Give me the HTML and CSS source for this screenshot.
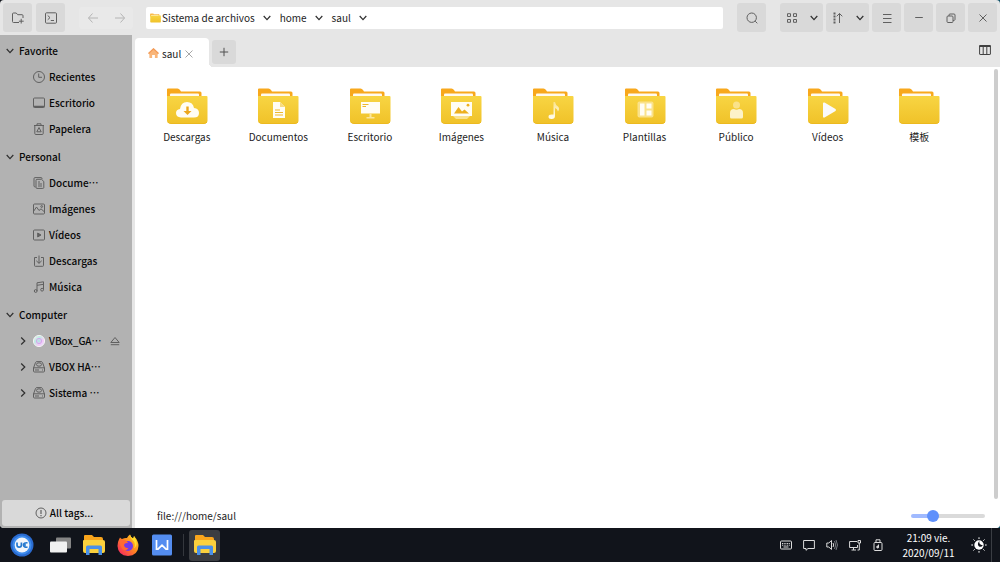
FILE: index.html
```html
<!DOCTYPE html>
<html lang="es">
<head>
<meta charset="utf-8">
<meta name="viewport" content="width=device-width, initial-scale=1">
<title>saul</title>
<link rel="stylesheet" href="styles.css">
</head>
<body>
<svg class="defs" width="0" height="0" aria-hidden="true">
  <defs>
    <linearGradient id="face" x1="0" y1="0" x2="0" y2="1"><stop offset="0" stop-color="#f8d543"/><stop offset="1" stop-color="#f0c229"/></linearGradient>
    <linearGradient id="fade" x1="0" y1="0" x2="0" y2="1"><stop offset="0" stop-color="#fbe48c"/><stop offset="1" stop-color="#fffdf4"/></linearGradient>
    <linearGradient id="fire" x1="1" y1="0" x2="0" y2="1"><stop offset="0" stop-color="#ffe226"/><stop offset=".45" stop-color="#ff8a1e"/><stop offset="1" stop-color="#f5156c"/></linearGradient>
    <linearGradient id="disc" x1="0" y1="0" x2="1" y2="1"><stop offset="0" stop-color="#ffe3f4"/><stop offset=".35" stop-color="#bdeee2"/><stop offset=".65" stop-color="#f3c9f5"/><stop offset="1" stop-color="#dbe4ff"/></linearGradient>
    <symbol id="folder" viewBox="0 0 42 36">
      <path d="M1 1.500Q1 .5 2 .5H11.500Q13 .5 14 2L15 3.500H34Q35.500 3.500 35.500 5V12H1Z" fill="#f8a81c"/>
      <path d="M4 6.500Q4 5.500 5 5.500H32Q33 5.500 33 6.500V10H4Z" fill="#fffaf0"/>
      <path d="M1 8H40.500Q41.500 8 41.500 9V32.500Q41.500 35.500 38.500 35.500H4Q1 35.500 1 32.500Z" fill="url(#face)"/>
      <path d="M2 34Q3 35.500 5 35.500H38Q40 35.500 41 34" fill="none" stroke="#ecb91f"/>
    </symbol>
    <symbol id="down" viewBox="0 0 8 8"><path d="M.7 2 4 5.700 7.300 2" fill="none" stroke="currentColor" stroke-width="1.200"/></symbol>
    <symbol id="right" viewBox="0 0 8 8"><path d="M2.200.5 5.800 4 2.200 7.500" fill="none" stroke="currentColor" stroke-width="1.200"/></symbol>
    <symbol id="drive" viewBox="0 0 12 12"><path d="M.5 7 2.500 1.500Q3 .6 4 .6H8Q9 .6 9.500 1.500L11.500 7V10Q11.500 11 10.500 11H1.500Q.5 11 .5 10ZM.8 6.800H11.200M2 9H6M9 9H10"/><ellipse cx="6" cy="3.500" rx="2.600" ry="1.700"/></symbol>
    <symbol id="files" viewBox="0 0 22 22">
      <path d="M1 2Q1 1 2 1H9L11 3H18Q20 3 20 5V12H1Z" fill="#f9a51c"/>
      <path d="M1 6H20Q22 6 22 8V17Q22 19 20 19H2Q0 19 0 17V7Q0 6 1 6Z" fill="#fbd13d"/>
      <path d="M3 13Q3 11.500 4.500 11.500H17.500Q19 11.500 19 13V21H15.500V15H6.500V21H3Z" fill="#4a90e8"/>
    </symbol>
  </defs>
</svg>

<div class="desktop">
  <div class="window">
    <header class="toolbar">
      <div class="tools">
        <button class="tool" aria-label="Nueva carpeta"><svg class="i12" viewBox="0 0 12 12"><path d="M7 10.500H1.500Q.5 10.500.5 9.500V2Q.5 1 1.500 1H4.200L5.700 2.700H10Q11 2.700 11 3.700V6M9.200 6.800V11.500M6.900 9.200H11.700"/></svg></button>
        <button class="tool" aria-label="Terminal"><svg class="i12" viewBox="0 0 12 12"><rect x=".5" y=".8" width="11" height="10.400" rx="1"/><path d="M2.700 3.500 5 5.600 2.700 7.800M5.800 8.500H9"/></svg></button>
      </div>
      <nav class="history" aria-label="Historial">
        <button class="step" disabled aria-label="Atrás"><svg class="i12" viewBox="0 0 12 12"><path d="M5.500 1.500 1.500 6 5.500 10.500M1.500 6H11"/></svg></button>
        <button class="step" disabled aria-label="Adelante"><svg class="i12" viewBox="0 0 12 12"><path d="M6.500 1.500 10.500 6 6.500 10.500M10.500 6H1"/></svg></button>
      </nav>
      <nav class="path" aria-label="Ruta">
        <svg class="crumb-icon" viewBox="0 0 42 36"><use href="#folder"/></svg>
        <button class="crumb">Sistema de archivos<svg class="chev"><use href="#down"/></svg></button>
        <button class="crumb">home<svg class="chev"><use href="#down"/></svg></button>
        <button class="crumb">saul<svg class="chev"><use href="#down"/></svg></button>
      </nav>
      <button class="tool" aria-label="Buscar"><svg class="i12" viewBox="0 0 12 12"><circle cx="5.700" cy="5.700" r="4.700"/><path d="M9.200 9.200 11.300 11.300"/></svg></button>
      <div class="tools actions">
        <button class="tool wide" aria-label="Vista"><svg class="i12" viewBox="0 0 12 12"><path d="M1.500 1.700H4.500V4.500H1.500ZM7.500 1.700H10.500V4.500H7.500ZM1.500 7.500H4.500V10.300H1.500ZM7.500 7.500H10.500V10.300H7.500Z"/></svg><svg class="chev"><use href="#down"/></svg></button>
        <button class="tool wide" aria-label="Ordenar"><svg class="i12" viewBox="0 0 12 12"><path d="M1.500 1.500H3.500M1.500 4.500H3.500M1.500 7.500H3.500M1.500 10.500H3.500" stroke-width="1.800"/><path d="M7.500 11V1.500M4.700 4.300 7.500 1.500 10.300 4.300"/></svg><svg class="chev"><use href="#down"/></svg></button>
        <button class="tool" aria-label="Menú"><svg class="i12" viewBox="0 0 12 12"><path d="M2 2.500H10.500M2 6.500H10.500M2 10.500H10.500"/></svg></button>
        <button class="tool" aria-label="Minimizar"><svg class="i12" viewBox="0 0 12 12"><path d="M2.200 5.500H9.800"/></svg></button>
        <button class="tool" aria-label="Restaurar"><svg class="i12" viewBox="0 0 12 12"><rect x="2" y="4" width="6" height="6.500" rx="1"/><path d="M4 4V3Q4 2 5 2H9Q10 2 10 3V7.500Q10 8.500 8 8.500"/></svg></button>
        <button class="tool" aria-label="Cerrar"><svg class="i12" viewBox="0 0 12 12"><path d="M2.500 2.500 9.500 9.500M9.500 2.500 2.500 9.500"/></svg></button>
      </div>
    </header>

    <div class="body">
      <aside class="sidebar">
        <nav class="places" aria-label="Lugares">
          <section class="group">
            <button class="heading"><svg class="chev"><use href="#down"/></svg>Favorite</button>
            <button class="place"><svg class="i12" viewBox="0 0 12 12"><circle cx="6" cy="6" r="5.500"/><path d="M5.700 2.500V6.300H9"/></svg>Recientes</button>
            <button class="place"><svg class="i12" viewBox="0 0 12 12"><rect x=".5" y="1" width="11" height="9.500" rx="1"/><path d="M.5 9.500H11.500" stroke-width="1.500"/></svg>Escritorio</button>
            <button class="place"><svg class="i12" viewBox="0 0 12 12"><path d="M1 2.500H11M4 2.500V.8H8V2.500M1.800 2.500V10.500Q1.800 11.500 2.800 11.500H9.200Q10.200 11.500 10.200 10.500V2.500M6 4.500 8.200 8.800H3.800Z"/></svg>Papelera</button>
          </section>
          <section class="group">
            <button class="heading"><svg class="chev"><use href="#down"/></svg>Personal</button>
            <button class="place"><svg class="i12" viewBox="0 0 12 12"><path d="M9 2V1.500Q9 .6 8 .6H2Q1 .6 1 1.600V9Q1 10 2.500 10M4 2.300H8.500L10.800 4.500V10.500Q10.800 11.400 9.800 11.400H4Q3 11.400 3 10.400V3.300Q3 2.300 4 2.300ZM5 5H7M5 7H9M5 9H9"/></svg><span lang="zh-CN">Docume⋯</span></button>
            <button class="place"><svg class="i12" viewBox="0 0 12 12"><rect x=".5" y="1" width="11" height="10" rx="1"/><path d="M.8 8 3.500 4 6 7.500 8 5.800 11 8.500"/><circle cx="8.700" cy="3.500" r=".9"/></svg>Imágenes</button>
            <button class="place"><svg class="i12" viewBox="0 0 12 12"><rect x=".5" y="1" width="11" height="10" rx="1"/><path d="M4.700 4V8L8 6Z" fill="#606060"/></svg>Vídeos</button>
            <button class="place"><svg class="i12" viewBox="0 0 12 12"><path d="M4 2.500H1.500V10.500Q1.500 11.300 2.300 11.300H9.700Q10.500 11.300 10.500 10.500V2.500H8M6 .5V8.300M3.300 5.800 6 8.300 8.700 5.800"/></svg>Descargas</button>
            <button class="place"><svg class="i12" viewBox="0 0 12 12"><path d="M4 10V1.800L10.500.8V8.500M4 4.300 10.500 3.300"/><circle cx="2.700" cy="10" r="1.400"/><circle cx="9.100" cy="8.700" r="1.400"/></svg>Música</button>
          </section>
          <section class="group">
            <button class="heading"><svg class="chev"><use href="#down"/></svg>Computer</button>
            <div class="device"><button class="place mount"><svg class="chev"><use href="#right"/></svg><svg class="i12" viewBox="0 0 12 12"><circle cx="6" cy="6" r="5.600" fill="url(#disc)" stroke="#f2f2f2"/><circle cx="6" cy="6" r="2.600" stroke="#d3a6ee"/><circle cx="6" cy="6" r="1" fill="#fff" stroke="#acd8e4"/></svg><span lang="zh-CN">VBox_GA⋯</span></button><button class="eject" aria-label="Expulsar"><svg viewBox="0 0 10 10"><path d="M5 1.500 9.200 6.500H.8ZM.8 8.700H9.200"/></svg></button></div>
            <button class="place mount"><svg class="chev"><use href="#right"/></svg><svg class="i12"><use href="#drive"/></svg><span lang="zh-CN">VBOX HA⋯</span></button>
            <button class="place mount"><svg class="chev"><use href="#right"/></svg><svg class="i12"><use href="#drive"/></svg><span lang="zh-CN">Sistema ⋯</span></button>
          </section>
        </nav>
        <button class="tags"><svg class="i12" viewBox="0 0 12 12"><circle cx="6" cy="6" r="5"/><path d="M6 3V7M6 8V9.200" stroke-width="1.200"/></svg>All tags...</button>
      </aside>

      <main class="main">
        <div class="tabbar">
          <div class="tab">
            <svg class="home" viewBox="0 0 12 12"><path d="M6 .8 11.500 6 10.500 7V11H7.500V7.500H4.500V11H1.500V7L.5 6Z" fill="#f9b578"/><path d="M.5 6 6 .8 11.500 6" fill="none" stroke="#f39a56" stroke-width="1.300"/></svg>
            <span>saul</span>
            <button class="close" aria-label="Cerrar pestaña"><svg viewBox="0 0 8 8"><path d="M.5.5 7.500 7.500M7.500.5.5 7.500"/></svg></button>
          </div>
          <button class="new-tab" aria-label="Nueva pestaña"><svg viewBox="0 0 10 10"><path d="M5 .8V9.200M.8 5H9.200"/></svg></button>
          <button class="preview" aria-label="Vista previa"><svg class="i12" viewBox="0 0 12 12"><rect x=".6" y="1.500" width="10.800" height="9" rx=".5"/><path d="M.5 2H11.500" stroke-width="1.800"/><path d="M4.200 2V10.500M7.800 2V10.500"/></svg></button>
        </div>
        <div class="view">
          <ul class="folders">
            <li class="folder"><svg viewBox="0 0 42 36"><use href="#folder"/><path d="M15 29.500Q10 29 10 25Q10 21.500 14 21Q15 14 21 14Q27 14 28 20Q33 20.500 33 25Q33 29.500 28 29.500Z" fill="#fffdf4"/><path d="M20.300 18.500H22.700V23H25.500L21.500 27 17.500 23H20.300Z" fill="#eda71b"/></svg><span>Descargas</span></li>
            <li class="folder"><svg viewBox="0 0 42 36"><use href="#folder"/><path d="M16 14H23L28 19V30H16Z" fill="#fffdf4"/><path d="M23 14V19H28Z" fill="#f8dc82"/><path d="M18 22H23M18 24.500H26M18 27H26" stroke="#edb82c" stroke-width="1.200"/></svg><span>Documentos</span></li>
            <li class="folder"><svg viewBox="0 0 42 36"><use href="#folder"/><path d="M12 14H31V25.500H12Z" fill="#fffdf4"/><path d="M20.500 25.500H22.500V29H25.500V30.500H17.500V29H20.500Z" fill="#fbe69b"/><path d="M13.500 16.500H19.500M13.500 18.500H17" stroke="#edb82c"/></svg><span>Escritorio</span></li>
            <li class="folder"><svg viewBox="0 0 42 36"><use href="#folder"/><path d="M13 28H30L27 31H16Z" fill="#fae28e"/><path d="M11 14H32V28H11Z" fill="#fffdf4"/><path d="M14 25.500 18.500 19 22 23.500 24.500 21.500 29 25.500Z" fill="#edb01e"/><circle cx="28" cy="17.200" r="1.400" fill="#edb01e"/></svg><span>Imágenes</span></li>
            <li class="folder"><svg viewBox="0 0 42 36"><use href="#folder"/><path d="M21.500 14H23Q23.500 17 26 18.500Q28 20.500 26 23.500Q25.500 20.500 23 20V28Q23 31 19.500 31Q16.500 31 16.500 28.800Q16.500 26.500 19.500 26.500H21.500Z" fill="url(#fade)"/></svg><span>Música</span></li>
            <li class="folder"><svg viewBox="0 0 42 36"><use href="#folder"/><rect x="13.500" y="13.500" width="16" height="16" rx="2" fill="#fae28a"/><path d="M16 15.500H20.500V27.500H16ZM22.500 15.500H27.500V20.500H22.500ZM22.500 22.500H27.500V27.500H22.500Z" fill="#fffdf4"/></svg><span>Plantillas</span></li>
            <li class="folder"><svg viewBox="0 0 42 36"><use href="#folder"/><circle cx="21.500" cy="17" r="3.500" fill="#fae28a"/><path d="M15 29V25Q15 21 19 21Q21.500 22.500 24 21Q28 21 28 25V29Q28 30.500 26.500 30.500H16.500Q15 30.500 15 29Z" fill="#fdf2c9"/></svg><span>Público</span></li>
            <li class="folder"><svg viewBox="0 0 42 36"><use href="#folder"/><path d="M16 15.500Q16 14 17.500 14.500L28.500 21Q29.500 22 28.500 23L17.500 29.500Q16 30 16 28.500Z" fill="#fafafa"/></svg><span>Vídeos</span></li>
            <li class="folder"><svg viewBox="0 0 42 36"><use href="#folder"/></svg><span>模板</span></li>
          </ul>
          <div class="scroll"></div>
        </div>
        <footer class="status">
          <span>file:///home/saul</span>
          <input class="zoom" type="range" min="0" max="100" value="25" aria-label="Tamaño de los iconos">
        </footer>
      </main>
    </div>
  </div>

  <footer class="taskbar">
    <button class="app start" aria-label="Inicio"><svg viewBox="0 0 24 24"><circle cx="12" cy="12" r="11.500" fill="#2a6bd0"/><circle cx="12" cy="12" r="9.500" fill="#3e8cec"/><circle cx="12" cy="12" r="7.400" fill="#f3f6fb"/><path d="M7 9.500V12Q7 14.200 9.200 14.200Q11.400 14.200 11.400 12V9.500M17.500 9.800Q13.500 9.500 13.500 12Q13.500 14.500 17.500 14.200M13 12H16" fill="none" stroke="#2679cf" stroke-width="1.700"/></svg></button>
    <button class="app" aria-label="Vista de tareas"><svg viewBox="0 0 24 24"><rect x="8" y="4.500" width="15" height="11" rx="1" fill="#858585"/><rect x="2" y="8.500" width="17" height="11" rx="1" fill="#f1f1f1"/></svg></button>
    <button class="app" aria-label="Archivos"><svg class="i22"><use href="#files"/></svg></button>
    <button class="app" aria-label="Firefox"><svg viewBox="0 0 24 24"><path d="M3 6.500 4 4.500Q5 5.500 6 6Q9 4.500 11 5Q12 2.500 14 1.500Q14.500 4 17 5.500L18 3Q22.500 8 22.500 13Q22 22.500 12 23Q2 22.500 1.500 13Q1.500 9 3 6.500Z" fill="url(#fire)"/><circle cx="12" cy="13" r="5" fill="#7139e8"/><path d="M4 7Q10 6 12 10Q8.500 9.500 8 12Q8.500 15.500 12.500 15Q10 19 6.500 16Q3 12 4 7Z" fill="#ff6b31"/><path d="M14 1.500Q14 5 17.500 8Q20 11 18 15.500Q22 12 20 7L18 3Q18 5 17 5.500Q14.500 4 14 1.500Z" fill="#ffe02e"/></svg></button>
    <button class="app" aria-label="WPS Writer"><svg viewBox="0 0 24 24"><rect x="2" y="1.500" width="20" height="21" rx="1.500" fill="#548df0"/><path d="M6.500 7V16.200H8L12 12.200 16 16.200H17.500V7" fill="none" stroke="#fff" stroke-width="1.700"/></svg></button>
    <span class="divider"></span>
    <button class="app active" aria-label="Archivos: saul"><svg class="i22"><use href="#files"/></svg></button>
    <div class="tray">
      <button aria-label="Teclado"><svg class="i12" viewBox="0 0 12 12"><rect x=".5" y="2" width="11" height="8" rx="1"/><path d="M2 4.500H10M2 6.200H10" stroke-dasharray="1 .7"/><path d="M3.500 8H8.500"/></svg></button>
      <button aria-label="Notificaciones"><svg class="i12" viewBox="0 0 12 12"><path d="M.6 1.500H11.400V9.500H5L3 11.300V9.500H.6Z"/></svg></button>
      <button aria-label="Volumen"><svg class="i12" viewBox="0 0 12 12"><path d="M5.500 1.500 2.800 4H.8V8H2.800L5.500 10.500ZM7 4Q8.500 6 7 8"/><path d="M8.500 2Q11 6 8.500 10M10 1Q13 6 10 11" stroke="#777a80"/></svg></button>
      <button aria-label="Red"><svg class="i12" viewBox="0 0 12 12"><path d="M8 2.500H.6V8.500H8.500V6M4.500 8.500V11M2.500 11H7M9 1.500H11.500V4H9ZM10.300 4V11H8.500"/></svg></button>
      <button aria-label="USB"><svg class="i12" viewBox="0 0 12 12"><rect x="2" y="3.500" width="8" height="8" rx="1"/><path d="M4 3.500V.8H8V3.500M6.500 5.500V8"/><circle cx="5.700" cy="8" r="1" fill="#ddd"/></svg></button>
    </div>
    <time class="clock" datetime="2020-09-11T21:09"><span>21:09 vie.</span><span>2020/09/11</span></time>
    <button class="night" aria-label="Modo nocturno"><svg viewBox="0 0 16 16"><circle cx="8" cy="8" r="4.700" fill="#fff"/><path d="M8.500 4Q7.300 7.500 11.800 8.300Q10.500 10.500 8 9.500Q5.500 7 8.500 4Z" fill="#11141b"/><path d="M8 .3V2M8 14V15.700M.3 8H2M14 8H15.700M2.500 2.500 3.700 3.700M12.300 12.300 13.500 13.500M13.500 2.500 12.300 3.700M3.700 12.300 2.500 13.500" stroke="#fff"/></svg></button>
    <button class="show-desktop" aria-label="Mostrar escritorio"></button>
  </footer>
</div>
</body>
</html>
```
FILE: styles.css
```css
* { box-sizing: border-box; }

body {
  margin: 0;
  background: linear-gradient(90deg, #11141b 50%, #0d5068);
  color: #1c1c1c;
  font: 10px/16px "Noto Sans CJK SC", "Noto Sans", sans-serif;
}

button {
  margin: 0;
  padding: 0;
  border: 0;
  background: none;
  color: inherit;
  font: inherit;
}

svg { display: block; flex: none; }
.defs { position: absolute; }

.i12 { width: 12px; height: 12px; fill: none; stroke: #606060; }
.i22 { width: 22px; height: 22px; }
.chev { width: 8px; height: 8px; color: #303030; }

.desktop { display: flex; flex-direction: column; height: 100vh; }

.window {
  display: flex;
  flex: 1;
  flex-direction: column;
  min-height: 0;
  overflow: hidden;
  border-radius: 4px;
  background: #e6e6e6;
}

/* Toolbar */
.toolbar { display: flex; align-items: center; height: 35px; padding: 0 3px; }
.tools { display: flex; gap: 4px; }
.actions { gap: 3px; margin-left: 14px; }

.tool {
  display: flex;
  align-items: center;
  justify-content: center;
  width: 29px;
  height: 29px;
  border-radius: 3px;
  background: #d9d9d9;
}
.tool.wide { gap: 12px; width: 43px; }

.history { display: flex; margin: 0 13px 0 14px; border-radius: 3px; background: #e9e9e9; }
.step { display: grid; place-items: center; width: 27px; height: 22px; }
.step svg { stroke: #b4b4b4; }

.path {
  display: flex;
  flex: 1;
  align-items: center;
  height: 22px;
  margin-right: 14px;
  padding-left: 4px;
  border-radius: 2px;
  background: #fff;
}
.crumb-icon { width: 11px; height: 10px; margin-right: 1px; }
.crumb { display: flex; align-items: center; gap: 8px; margin-right: 9px; }

.body { display: flex; flex: 1; min-height: 0; }

/* Sidebar */
.sidebar {
  display: flex;
  flex-direction: column;
  justify-content: space-between;
  width: 132px;
  margin-right: 3px;
  padding: 3px 2px 2px;
  background: #b2b2b2;
  color: #080808;
  font-weight: 500;
}
.places, .group { display: flex; flex-direction: column; }
.places { gap: 2px; }
.heading, .place { display: flex; align-items: center; height: 26px; white-space: nowrap; }
.heading { gap: 5px; padding-left: 4px; }
.place { gap: 4px; padding-left: 31px; }
.mount { gap: 4px; padding-left: 17px; }
.mount .chev { margin-right: 2px; }
.device { display: flex; align-items: center; justify-content: space-between; padding-right: 10px; }
.eject svg { width: 10px; height: 10px; fill: none; stroke: #606060; }

.tags {
  display: flex;
  align-items: center;
  justify-content: center;
  gap: 3px;
  height: 26px;
  padding-right: 4px;
  border-radius: 3px;
  background: #d9d9d9;
}

/* Main pane */
.main { display: flex; flex: 1; flex-direction: column; min-width: 0; }
.tabbar { display: flex; align-items: center; height: 32px; }

.tab {
  position: relative;
  display: flex;
  align-items: center;
  align-self: flex-end;
  gap: 3px;
  width: 74px;
  height: 29px;
  padding: 2px 0 0 13px;
  border-radius: 4px 4px 0 0;
  background: #fff;
}
.tab::after {
  position: absolute;
  bottom: 0;
  left: 100%;
  width: 4px;
  height: 4px;
  background: radial-gradient(circle at 100% 0, #e6e6e6 4px, #fff 4px);
  content: "";
}
.home { width: 11px; height: 11px; }
.close { margin-left: 1px; }
.close svg { width: 8px; height: 8px; stroke: #a6a6a6; }

.new-tab {
  display: grid;
  place-items: center;
  width: 24px;
  height: 24px;
  margin: 2px 0 0 3px;
  border-radius: 3px;
  background: #d9d9d9;
}
.new-tab svg { width: 10px; height: 10px; stroke: #505050; }
.preview { margin: 0 9px 2px auto; }
.preview svg { stroke: #404040; }

.view { display: flex; flex: 1; padding: 2px 2px 0 0; background: #fff; }

.folders {
  display: grid;
  flex: 1;
  grid-template-columns: repeat(auto-fill, minmax(90px, 1fr));
  align-content: start;
  row-gap: 20px;
  margin: 0;
  padding: 19px 29px 0 6px;
  list-style: none;
}
.folder { display: flex; flex-direction: column; align-items: center; gap: 5px; }
.folder svg { width: 42px; height: 36px; }
.scroll { width: 4px; border-radius: 2px; background: #cdcdcd; }

.status {
  display: flex;
  align-items: center;
  justify-content: space-between;
  height: 29px;
  padding: 4px 15px 0 22px;
  background: #fff;
}

.zoom {
  width: 74px;
  height: 12px;
  margin: 0;
  appearance: none;
  background: none;
}
.zoom::-webkit-slider-runnable-track {
  height: 4px;
  border-radius: 2px;
  background: linear-gradient(90deg, #a0baff 28%, #dadada 28%);
}
.zoom::-webkit-slider-thumb {
  width: 12px;
  height: 12px;
  margin-top: -4px;
  border-radius: 50%;
  appearance: none;
  background: #5f90fb;
}

/* Taskbar */
.taskbar {
  display: flex;
  align-items: center;
  height: 34px;
  padding-left: 6px;
  background: #11141b;
  color: #fff;
}
.app { display: grid; place-items: center; width: 31px; height: 31px; margin-right: 3px; border-radius: 3px; }
.app > svg:not(.i22) { width: 24px; height: 24px; }
.app.start { margin-right: 7px; }
.app.active { background: #3b3d42; }
.divider { width: 1px; height: 22px; margin: 0 5px 0 3px; background: #34373d; }

.tray { display: flex; gap: 11px; margin-left: auto; }
.tray .i12 { stroke: #dcdcdc; }
.clock { display: flex; flex-direction: column; width: 55px; margin: 0 15px 0 17px; line-height: 15px; text-align: center; }
.night svg { width: 16px; height: 16px; }
.show-desktop { align-self: stretch; width: 9px; margin-left: 4px; border-left: 1px solid #3a3d43; }
```
